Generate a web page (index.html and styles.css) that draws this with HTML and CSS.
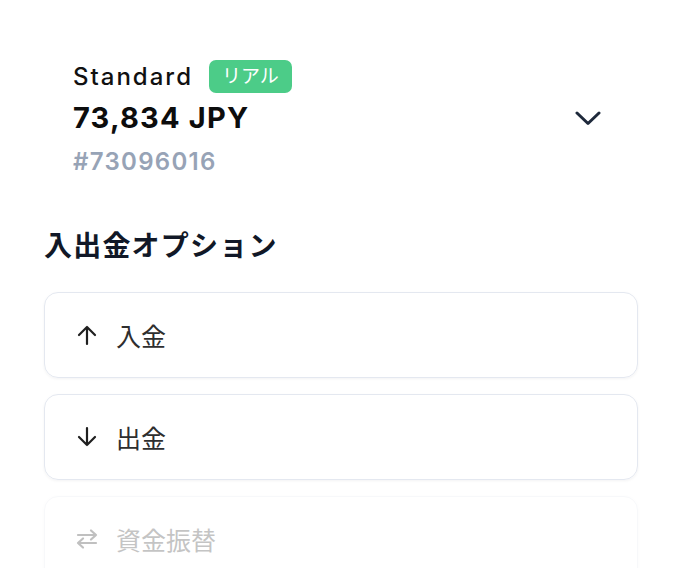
FILE: index.html
```html
<!DOCTYPE html>
<html lang="ja">
<head>
    <meta charset="UTF-8">
    <title>入出金オプション</title>
    <link rel="stylesheet" href="styles.css">
</head>
<body>
    <div class="page">
        <div class="account">
            <div class="account-info">
                <div class="account-type">
                    <span class="type-name">Standard</span>
                    <span class="badge">リアル</span>
                </div>
                <div class="balance">73,834 JPY</div>
                <div class="account-id">#73096016</div>
            </div>
            <svg class="chevron" width="26" height="15" viewBox="0 0 26 15">
                <path d="M2 2 L13 12.5 L24 2" fill="none" stroke="#1e293b" stroke-width="3" stroke-linecap="round" stroke-linejoin="round"/>
            </svg>
        </div>

        <h2 class="section-title">入出金オプション</h2>

        <div class="options">
            <div class="option">
                <svg class="option-icon" width="22" height="22" viewBox="0 0 22 22">
                    <path d="M11 20 V3 M3 11 L11 3 L19 11" fill="none" stroke="#1f1f1f" stroke-width="2.2" stroke-linecap="round" stroke-linejoin="round"/>
                </svg>
                <span class="option-label">入金</span>
            </div>
            <div class="option">
                <svg class="option-icon" width="22" height="22" viewBox="0 0 22 22">
                    <path d="M11 2 V19 M3 11 L11 19 L19 11" fill="none" stroke="#1f1f1f" stroke-width="2.2" stroke-linecap="round" stroke-linejoin="round"/>
                </svg>
                <span class="option-label">出金</span>
            </div>
            <div class="option disabled">
                <svg class="option-icon" width="22" height="22" viewBox="0 0 22 22">
                    <path d="M2 7 H20 M15 2.5 L20 7 L15 11.5 M20 15 H2 M7 10.5 L2 15 L7 19.5" fill="none" stroke="#1f1f1f" stroke-width="2.2" stroke-linecap="round" stroke-linejoin="round"/>
                </svg>
                <span class="option-label">資金振替</span>
            </div>
        </div>
    </div>
</body>
</html>
```

FILE: styles.css
```css
body {
    margin: 0;
    background: #fff;
    font-family: Inter, "Noto Sans CJK JP", sans-serif;
    color: #111;
}

.page {
    padding: 60px 45px 0 44px;
}

/* account header */
.account {
    display: flex;
    align-items: center;
    justify-content: space-between;
    padding: 0 37px 0 29px;
}
.account-type {
    display: flex;
    align-items: center;
    gap: 16px;
}
.type-name {
    font-size: 24px;
    font-weight: 500;
    letter-spacing: 2px;
    color: #111;
}
.badge {
    background: #4ccc88;
    color: #fff;
    font-size: 19px;
    line-height: 33px;
    padding: 0 13px;
    border-radius: 7px;
}
.balance {
    margin-top: 8px;
    font-size: 29px;
    font-weight: 700;
    letter-spacing: 1.2px;
    line-height: 34px;
    color: #0d0d0d;
}
.account-id {
    margin-top: 13px;
    font-size: 24px;
    font-weight: 600;
    letter-spacing: 1.3px;
    line-height: 28px;
    color: #97a3b6;
}
.chevron {
    margin-top: 1px;
}

/* options */
.section-title {
    margin: 52px 0 28px;
    font-size: 28px;
    font-weight: 700;
    letter-spacing: 1.2px;
    line-height: 36px;
    color: #111827;
}
.options {
    display: flex;
    flex-direction: column;
    gap: 16px;
}
.option {
    display: flex;
    align-items: center;
    gap: 18px;
    height: 84px;
    padding: 0 31px;
    border: 1px solid #e4e8f0;
    border-radius: 14px;
    box-shadow: 0 1px 3px rgba(15, 23, 42, 0.05);
}
.option-label {
    font-size: 25px;
    color: #2e2e2e;
}
.disabled {
    opacity: 0.28;
}
```
